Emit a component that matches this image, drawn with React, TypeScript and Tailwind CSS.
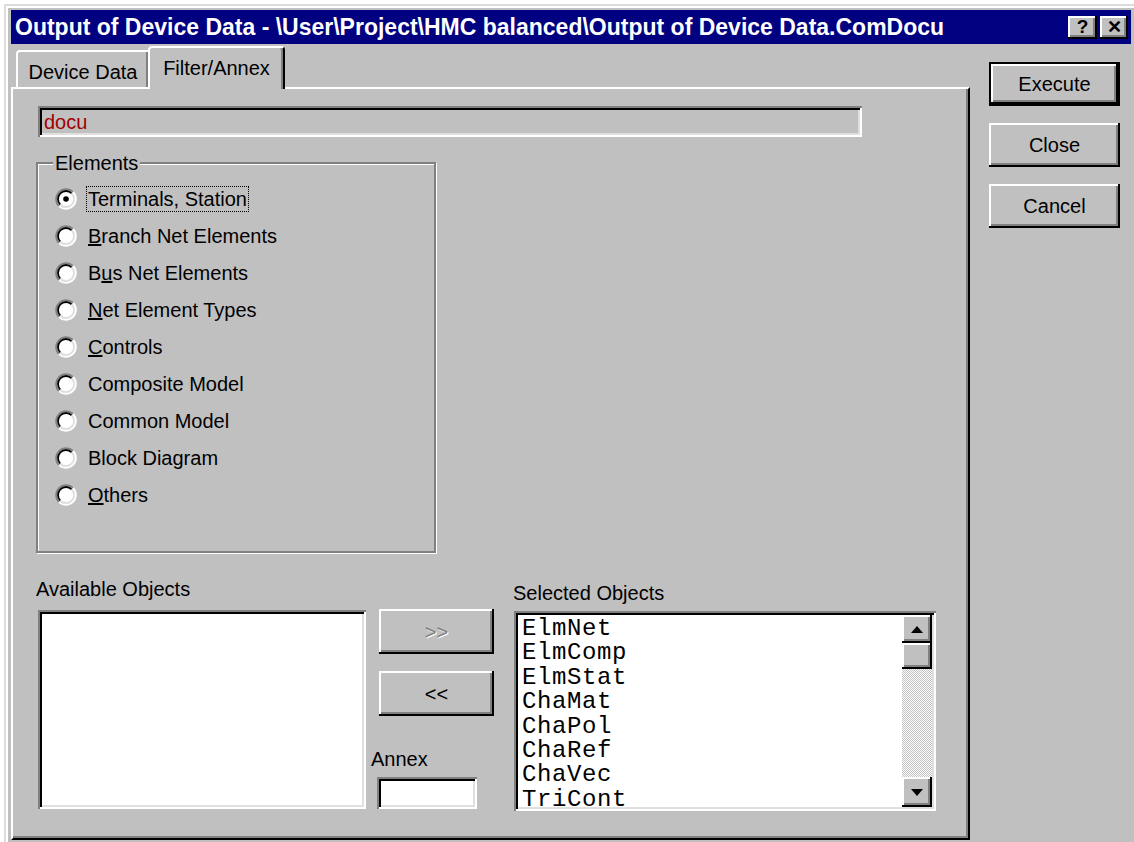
import type { ReactNode } from "react";

const elements: { label: ReactNode; checked?: boolean }[] = [
  { label: "Terminals, Station", checked: true },
  { label: <><u>B</u>ranch Net Elements</> },
  { label: <>B<u>u</u>s Net Elements</> },
  { label: <><u>N</u>et Element Types</> },
  { label: <><u>C</u>ontrols</> },
  { label: "Composite Model" },
  { label: "Common Model" },
  { label: "Block Diagram" },
  { label: <><u>O</u>thers</> },
];

const selected = ["ElmNet", "ElmComp", "ElmStat", "ChaMat", "ChaPol", "ChaRef", "ChaVec", "TriCont"];

// classic raised bevel
const raised =
  "bg-[#c0c0c0] shadow-[inset_-2px_-2px_0_#000,inset_2px_2px_0_#fff,inset_-4px_-4px_0_#808080]";
// classic sunken well
const sunken =
  "shadow-[inset_2px_2px_0_#808080,inset_-2px_-2px_0_#fff,inset_4px_4px_0_#000,inset_-4px_-4px_0_#dfdfdf]";

function Radio({ checked }: { checked?: boolean }) {
  return (
    <svg width="22" height="22" viewBox="0 0 22 22" className="shrink-0">
      <circle cx="11" cy="11" r="9" fill="#fff" />
      <path d="M3.93 18.07 A10 10 0 0 1 18.07 3.93" fill="none" stroke="#808080" strokeWidth="1.8" />
      <path d="M18.07 3.93 A10 10 0 0 1 3.93 18.07" fill="none" stroke="#fff" strokeWidth="1.8" />
      <path d="M5.34 16.66 A8 8 0 0 1 16.66 5.34" fill="none" stroke="#000" strokeWidth="1.8" />
      <path d="M16.66 5.34 A8 8 0 0 1 5.34 16.66" fill="none" stroke="#dfdfdf" strokeWidth="1.8" />
      {checked && <circle cx="11" cy="11" r="2.8" fill="#000" />}
    </svg>
  );
}

function Arrow({ up }: { up?: boolean }) {
  return (
    <svg width="12" height="7" viewBox="0 0 12 7">
      <path d={up ? "M6 0 L12 7 L0 7 Z" : "M0 0 L12 0 L6 7 Z"} fill="#000" />
    </svg>
  );
}

function PushButton({ children, isDefault }: { children: ReactNode; isDefault?: boolean }) {
  if (isDefault) {
    return (
      <div className="h-[44px] w-[131px] border-2 border-black">
        <div className={`flex h-full w-full items-center justify-center ${raised}`}>{children}</div>
      </div>
    );
  }
  return <div className={`flex h-[44px] w-[131px] items-center justify-center ${raised}`}>{children}</div>;
}

export default function App() {
  return (
    <div className="h-[842px] w-[1134px] overflow-hidden bg-white font-['Liberation_Sans',Arial,sans-serif] text-[20px] leading-[24px] text-black">
      <div className="ml-[4px] mt-[4px] h-[838px] border-l-2 border-t-2 border-[#dcdcdc]">
        <div className="h-full border-l-2 border-t-2 border-white">
          <div className="h-full bg-[#c0c0c0] pl-[3px] pr-[3px] pt-[2px]">
            {/* caption */}
            <div className="flex h-[34px] items-center justify-between bg-[#000080] pl-[4px] pr-[3px]">
              <span className="text-[23px] font-bold text-white">
                Output of Device Data - \User\Project\HMC balanced\Output of Device Data.ComDocu
              </span>
              <div className="flex gap-[3px]">
                <div className={`flex h-[23px] w-[29px] items-center justify-center text-[19px] font-bold ${raised}`}>?</div>
                <div className={`flex h-[23px] w-[28px] items-center justify-center text-[18px] font-bold ${raised}`}>✕</div>
              </div>
            </div>

            <div className="flex">
              {/* property sheet */}
              <div className="w-[959px]">
                <div className="flex h-[43px] items-end pl-[5px]">
                  <div className="flex h-[37px] w-[132px] items-start justify-center rounded-tl-[4px] border-l-2 border-t-2 border-white pt-[8px] shadow-[inset_-2px_0_0_#808080]">
                    Device Data
                  </div>
                  <div className="relative z-10 -mb-[2px] flex h-[43px] w-[137px] items-start justify-center rounded-t-[4px] border-l-2 border-r-2 border-t-2 border-l-white border-r-black border-t-white bg-[#c0c0c0] pt-[8px] shadow-[inset_-2px_0_0_#808080]">
                    Filter/Annex
                  </div>
                </div>

                <div className="h-[753px] border-2 border-b-black border-l-white border-r-black border-t-white shadow-[inset_-2px_-2px_0_#808080]">
                  {/* name field */}
                  <div className={`ml-[25px] mt-[17px] flex h-[31px] w-[824px] items-center pl-[6px] text-[#a00000] ${sunken} bg-[#c0c0c0]`}>
                    docu
                  </div>

                  {/* Elements group */}
                  <div className="relative ml-[23px] mt-[25px] h-[391px] w-[400px] border-2 border-[#808080] pl-[17px] pt-[16px] shadow-[1px_1px_0_#fff,inset_1px_1px_0_#fff]">
                    <span className="absolute -top-[13px] left-[15px] bg-[#c0c0c0] px-[2px]">Elements</span>
                    {elements.map((el, i) => (
                      <div key={i} className="flex h-[37px] items-center gap-[11px]">
                        <Radio checked={el.checked} />
                        <span className={el.checked ? "-ml-[2px] border border-dotted border-black px-[1px]" : ""}>
                          {el.label}
                        </span>
                      </div>
                    ))}
                  </div>

                  {/* object lists */}
                  <div className="mt-[24px] flex items-start">
                    <div className="ml-[23px]">
                      <div>Available Objects</div>
                      <div className={`ml-[2px] mt-[9px] h-[199px] w-[328px] bg-white ${sunken}`} />
                    </div>

                    <div className="ml-[5px] w-[123px] pt-[32px]">
                      <div className={`ml-[8px] flex h-[45px] w-[115px] items-center justify-center text-[#808080] [text-shadow:1px_1px_0_#fff] ${raised}`}>
                        &gt;&gt;
                      </div>
                      <div className={`ml-[8px] mt-[17px] flex h-[45px] w-[115px] items-center justify-center ${raised}`}>
                        &lt;&lt;
                      </div>
                      <div className="mt-[31px]">Annex</div>
                      <div className={`ml-[6px] mt-[6px] h-[32px] w-[100px] bg-white ${sunken}`} />
                    </div>

                    <div className="ml-[19px] pt-[4px]">
                      <div>Selected Objects</div>
                      <div className={`ml-[1px] mt-[6px] flex h-[200px] w-[422px] bg-white p-[4px] ${sunken}`}>
                        <div className="flex-1 pl-[4px] pt-[2px] font-['Liberation_Mono','Courier_New',monospace] text-[24px] leading-[24.4px] tracking-[0.6px]">
                          {selected.map((s) => (
                            <div key={s}>{s}</div>
                          ))}
                        </div>
                        <div className="flex w-[30px] flex-col">
                          <div className={`flex h-[28px] items-center justify-center ${raised}`}>
                            <Arrow up />
                          </div>
                          <div className={`h-[26px] ${raised}`} />
                          <div className="flex-1 bg-[repeating-conic-gradient(#c0c0c0_0%_25%,#fff_0%_50%)] bg-[length:2px_2px]" />
                          <div className={`flex h-[30px] items-center justify-center ${raised}`}>
                            <Arrow />
                          </div>
                        </div>
                      </div>
                    </div>
                  </div>
                </div>
              </div>

              {/* dialog buttons */}
              <div className="ml-[19px] mt-[18px] flex flex-col gap-[17px]">
                <PushButton isDefault>Execute</PushButton>
                <PushButton>Close</PushButton>
                <PushButton>Cancel</PushButton>
              </div>
            </div>
          </div>
        </div>
      </div>
    </div>
  );
}
